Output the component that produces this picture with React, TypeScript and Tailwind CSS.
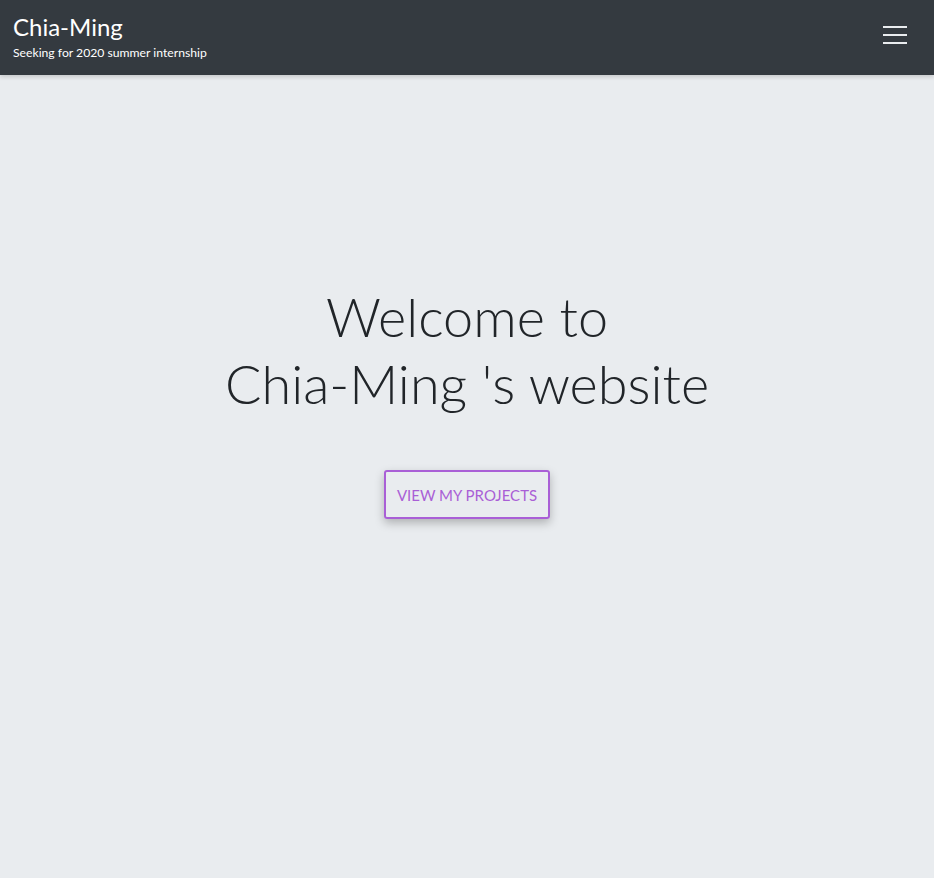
import React from "react";

const font = { fontFamily: 'Lato, "Noto Sans", sans-serif' };

export default function App() {
  return (
    <div className="min-h-screen bg-[#e9ecef]" style={font}>
      {/* NAVBAR */}
      <nav className="h-[75px] bg-[#343a40] flex items-center justify-between pl-[13px] pr-[27px] shadow-[0_2px_4px_rgba(0,0,0,0.15)]">
        <div className="flex flex-col text-white">
          <span className="text-[24px] leading-[30px] mt-[-3px]">Chia-Ming</span>
          <span className="text-[12.2px] leading-[16px] mt-[3px]">
            Seeking for 2020 summer internship
          </span>
        </div>
        <button className="flex flex-col gap-[6px] w-[24px] mt-[-6px]">
          <span className="h-[2px] w-full bg-[#e9ecef]" />
          <span className="h-[2px] w-full bg-[#e9ecef]" />
          <span className="h-[2px] w-full bg-[#e9ecef]" />
        </button>
      </nav>

      {/* HERO */}
      <section className="flex flex-col items-center pt-[208px]">
        <h1 className="text-[54px] font-light text-[#212529] text-center">
          <div className="leading-[67px]">Welcome to</div>
          <div className="leading-[67px]">Chia-Ming 's website</div>
        </h1>
        <button className="mt-[53px] h-[49px] w-[166px] border-2 border-[#a95fd6] rounded-[3px] text-[#a95fd6] text-[15px] pt-[2px] uppercase shadow-[0_4px_10px_rgba(0,0,0,0.25)]">
          View my projects
        </button>
      </section>
    </div>
  );
}
